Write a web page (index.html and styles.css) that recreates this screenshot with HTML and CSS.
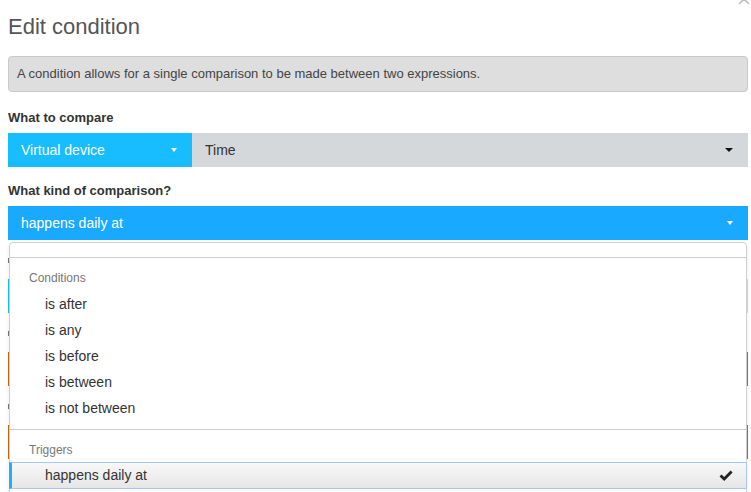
FILE: index.html
```html
<!DOCTYPE html>
<html lang="en">

<head>
    <meta charset="UTF-8">
    <title>Edit condition</title>
    <link rel="stylesheet" href="styles.css">
</head>

<body>

    <div class="dialog">
        <button class="close" aria-label="Close">
            <svg width="12" height="12" viewBox="0 0 12 12">
                <path d="M1 1 L11 11 M11 1 L1 11" stroke="#bdbdbd" stroke-width="1.6" fill="none" />
            </svg>
        </button>

        <h1 class="title">Edit condition</h1>

        <div class="info">A condition allows for a single comparison to be made between two expressions.</div>

        <div class="field">
            <label class="field-label">What to compare</label>
            <div class="compare">
                <div class="pick pick-blue">Virtual device <span class="caret"></span></div>
                <div class="pick pick-grey">Time <span class="caret caret-dark"></span></div>
            </div>
        </div>

        <div class="field">
            <label class="field-label">What kind of comparison?</label>
            <div class="kind">
                <div class="pick pick-select">happens daily at <span class="caret"></span></div>

                <div class="menu">
                    <div class="menu-search"></div>
                    <div class="menu-group">
                        <div class="menu-head">Conditions</div>
                        <div class="menu-item">is after</div>
                        <div class="menu-item">is any</div>
                        <div class="menu-item">is before</div>
                        <div class="menu-item">is between</div>
                        <div class="menu-item">is not between</div>
                    </div>
                    <div class="menu-group last">
                        <div class="menu-head">Triggers</div>
                        <div class="menu-item selected">
                            <span>happens daily at</span>
                            <svg width="14" height="11" viewBox="0 0 14 11">
                                <path d="M1.5 5.5 L5.2 9 L12.6 1.5" stroke="#222" stroke-width="2.8" fill="none" />
                            </svg>
                        </div>
                    </div>
                </div>
            </div>
        </div>

        <!-- fields hidden under the open menu, only their edges show -->
        <div class="field">
            <div class="field-label-edge"></div>
            <div class="compare">
                <div class="pick pick-blue"></div>
                <div class="pick pick-grey"></div>
            </div>
        </div>

        <div class="field">
            <div class="field-label-edge"></div>
            <div class="input-warn"></div>
        </div>

        <div class="field">
            <div class="field-label-edge"></div>
            <div class="input-warn"></div>
        </div>
    </div>

</body></html>
```

FILE: styles.css
```css
* {
    margin: 0;
    box-sizing: border-box;
}

html,
body {
    height: 492px;
    overflow: hidden;
}

body {
    font-family: "Liberation Sans", Arial, sans-serif;
    color: #333;
    background-color: white;
}

.dialog {
    position: relative;
    padding: 14px 3px 0 8px;
}

.close {
    position: absolute;
    top: -7px;
    right: 1px;
    padding: 0;
    border: none;
    background: none;
    line-height: 0;
}

.title {
    font-size: 22px;
    font-weight: normal;
    line-height: 26px;
    color: #555;
    margin: 0 0 16px;
}

.info {
    background-color: #dedede;
    border: 1px solid #c9c9c9;
    border-radius: 4px;
    padding: 9px 8px;
    font-size: 13px;
    line-height: 16px;
    color: #444;
    margin-bottom: 17px;
}

.field + .field {
    margin-top: 15px;
}

.field-label {
    display: block;
    font-size: 13px;
    font-weight: bold;
    line-height: 18px;
    margin-bottom: 6px;
    color: #333;
}

.field-label-edge {
    height: 18px;
    margin-bottom: 6px;
    border-left: 1px solid #777;
    border-image: linear-gradient(transparent 4px, #777 4px, #777 8px, transparent 8px) 1;
}

.compare {
    display: flex;
}

.pick {
    display: flex;
    align-items: center;
    justify-content: space-between;
    height: 34px;
    padding: 0 15px 0 13px;
    font-size: 14px;
}

.pick-blue {
    width: 184px;
    background-color: #17bdfe;
    color: white;
}

.pick-grey {
    flex: 1;
    background-color: #d5d8da;
    color: #333;
}

.pick-select {
    background-color: #19aaff;
    color: white;
}

.caret {
    width: 0;
    height: 0;
    border-left: 3px solid transparent;
    border-right: 3px solid transparent;
    border-top: 4px solid white;
}

.caret-dark {
    border-left-width: 4px;
    border-right-width: 4px;
    border-top-color: #111;
}

.kind {
    position: relative;
}

.menu {
    position: absolute;
    top: 36px;
    left: 1px;
    right: 1px;
    z-index: 5;
    background-color: white;
    border: 1px solid #cfcfcf;
    border-radius: 4px;
    box-shadow: 0 2px 4px rgba(0, 0, 0, 0.08);
}

.menu-search {
    height: 15px;
    border-bottom: 1px solid #cccccc;
}

.menu-group {
    padding-bottom: 8px;
    border-bottom: 1px solid #cccccc;
}

.menu-group.last {
    border-bottom: none;
    padding-bottom: 30px;
}

.menu-head {
    font-size: 12px;
    line-height: 18px;
    color: #777;
    padding: 11px 0 4px 19px;
}

.last .menu-head {
    padding-bottom: 3px;
}

.menu-item {
    font-size: 14px;
    line-height: 26px;
    color: #333;
    padding-left: 35px;
}

.menu-item.selected {
    display: flex;
    align-items: center;
    justify-content: space-between;
    margin: 0 -1px;
    padding: 0 13px 0 33px;
    line-height: 25px;
    border: 1px solid #a8c8f4;
    border-left: 3px solid #1cb0ff;
    background: linear-gradient(#f8f8f8, #e6e6e6);
}

.input-warn {
    height: 34px;
    border: 1px solid #c8680f;
    background-color: white;
}
```
